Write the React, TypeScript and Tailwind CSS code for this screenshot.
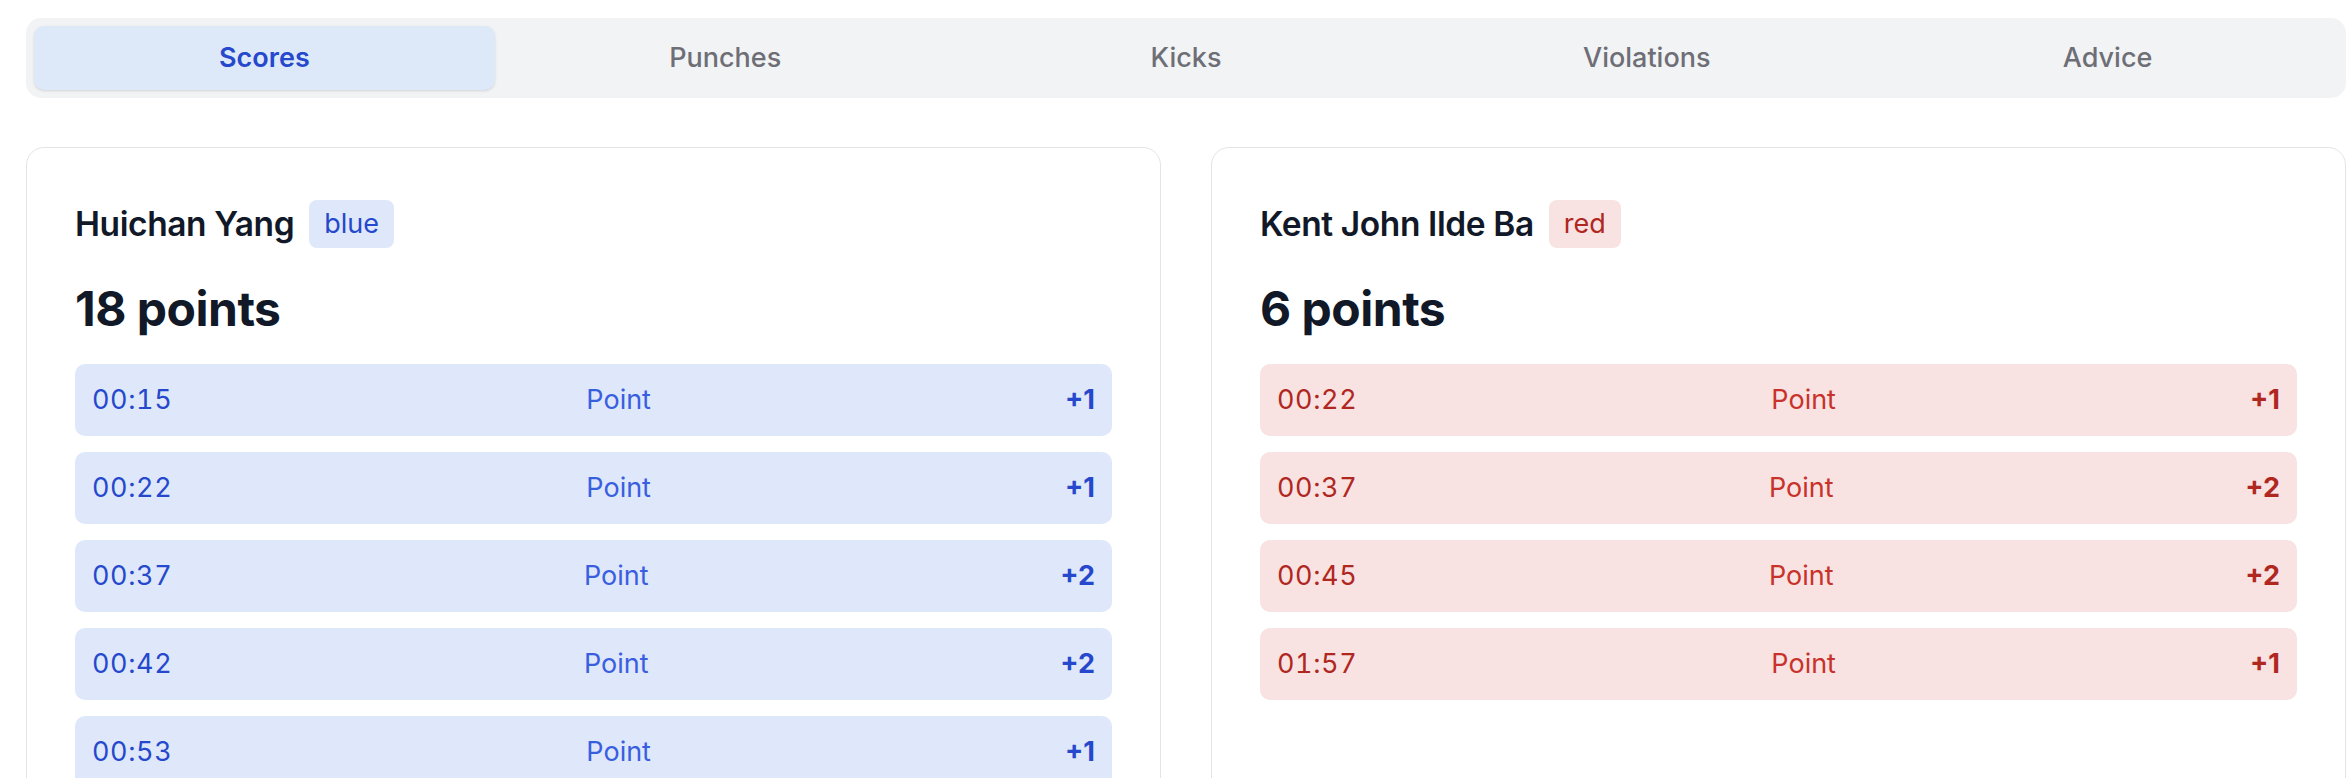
import React from "react";

type Row = { t: string; v: number };

const blueRows: Row[] = [
  { t: "00:15", v: 1 },
  { t: "00:22", v: 1 },
  { t: "00:37", v: 2 },
  { t: "00:42", v: 2 },
  { t: "00:53", v: 1 },
  { t: "01:10", v: 2 },
  { t: "01:24", v: 1 },
  { t: "01:31", v: 2 },
  { t: "01:45", v: 2 },
  { t: "01:52", v: 1 },
  { t: "01:58", v: 3 },
];

const redRows: Row[] = [
  { t: "00:22", v: 1 },
  { t: "00:37", v: 2 },
  { t: "00:45", v: 2 },
  { t: "01:57", v: 1 },
];

const tabs = ["Scores", "Punches", "Kicks", "Violations", "Advice"];

function Card({
  name,
  color,
  points,
  rows,
}: {
  name: string;
  color: "blue" | "red";
  points: number;
  rows: Row[];
}) {
  const isBlue = color === "blue";
  return (
    <div className="rounded-[18px] border border-[#e4e4e7] bg-white px-[48px] pt-[48px] pb-[48px]">
      <div className="flex h-[56px] items-center gap-[15px]">
        <span className="text-[33.5px] font-semibold tracking-[-0.4px] text-[#111827]">{name}</span>
        <span
          className={
            isBlue
              ? "flex h-[48px] items-center rounded-[8px] bg-[#dee8fa] px-[15px] text-[27px] text-[#2648cc]"
              : "flex h-[48px] items-center rounded-[8px] bg-[#f8e2e2] px-[15px] text-[27px] text-[#b0271f]"
          }
        >
          {color}
        </span>
      </div>
      <div className="mt-[29px] text-[48px] font-bold leading-[56px] tracking-[-0.5px] text-[#111827]">
        {points} points
      </div>
      <div className="mt-[27px] flex flex-col gap-[16px]">
        {rows.map((r, i) => (
          <div
            key={i}
            className={
              isBlue
                ? "flex h-[72px] items-center justify-between rounded-[10px] bg-[#dee8fa] px-[17px] text-[27px]"
                : "flex h-[72px] items-center justify-between rounded-[10px] bg-[#f8e2e2] px-[17px] text-[27px]"
            }
          >
            <span className={isBlue ? "tabular-nums tracking-[0.6px] text-[#2648cc]" : "tabular-nums tracking-[0.6px] text-[#b0271f]"}>
              {r.t}
            </span>
            <span className={isBlue ? "text-[#3a5ee0]" : "text-[#c8322a]"}>Point</span>
            <span className={isBlue ? "font-bold text-[#2648cc]" : "font-bold text-[#b0271f]"}>+{r.v}</span>
          </div>
        ))}
      </div>
    </div>
  );
}

export default function App() {
  return (
    <div
      className="min-h-screen bg-white pl-[26px] pr-[4px] pt-[18px]"
      style={{ fontFamily: "Inter, 'Noto Sans', 'Liberation Sans', sans-serif" }}
    >
      <div className="grid h-[80px] grid-cols-5 rounded-[15px] bg-[#f2f3f5] p-[8px]">
        {tabs.map((t, i) => (
          <div
            key={t}
            className={
              i === 0
                ? "flex items-center justify-center rounded-[10px] bg-[#dde8f9] text-[27px] font-semibold text-[#2648cc] shadow-sm"
                : "flex items-center justify-center rounded-[10px] text-[27px] font-medium text-[#6e6e76]"
            }
          >
            {t}
          </div>
        ))}
      </div>
      <div className="mt-[49px] grid grid-cols-2 gap-[50px]">
        <Card name="Huichan Yang" color="blue" points={18} rows={blueRows} />
        <Card name="Kent John Ilde Ba" color="red" points={6} rows={redRows} />
      </div>
    </div>
  );
}
